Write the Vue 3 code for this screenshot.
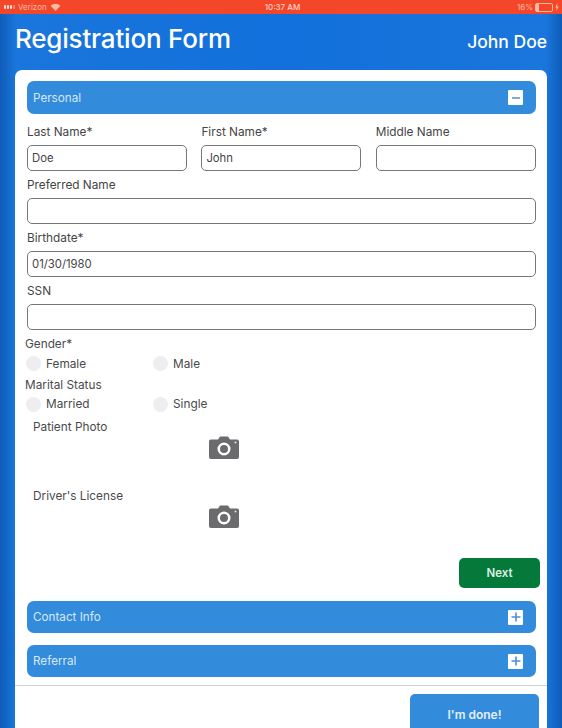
<template>
  <div class="screen">
    <div class="status-bar">
      <div class="status-left">
        <span class="signal"><i></i><i></i><i></i><i class="off"></i></span>
        <span>Verizon</span>
        <svg class="wifi" width="11" height="8" viewBox="0 0 12 9">
          <path d="M0.5 3 A8 8 0 0 1 11.5 3 L6 9 Z" fill="#f9b9a4" />
        </svg>
      </div>
      <div class="status-time">10:37 AM</div>
      <div class="status-right">
        <span>16%</span>
        <span class="battery"><i></i></span>
        <svg width="4" height="8" viewBox="0 0 4 8"><path d="M2.4 0 L0.3 4.5 H1.7 L1.4 8 L3.7 3.4 H2.2 Z" fill="#f9b9a4" /></svg>
      </div>
    </div>

    <header class="top">
      <h1>Registration Form</h1>
      <span class="user">John Doe</span>
    </header>

    <main class="card">
      <div class="card-body">
        <div class="section-bar">
          <span>Personal</span>
          <span class="toggle"><svg width="12" height="12" viewBox="0 0 12 12"><path d="M2 6 H10" stroke="#7fa9d8" stroke-width="2" /></svg></span>
        </div>

        <div class="row-3">
          <div v-for="f in nameFields" :key="f.label" class="field">
            <label>{{ f.label }}</label>
            <input :value="f.value" />
          </div>
        </div>

        <div v-for="f in wideFields" :key="f.label" class="field wide">
          <label>{{ f.label }}</label>
          <input :value="f.value" />
        </div>

        <div v-for="g in radioGroups" :key="g.label" class="radio-group">
          <div class="group-label">{{ g.label }}</div>
          <div class="radio-row">
            <div v-for="o in g.options" :key="o" class="radio">
              <span class="dot"></span>
              <span>{{ o }}</span>
            </div>
          </div>
        </div>

        <div v-for="p in photos" :key="p" class="photo">
          <div class="photo-label">{{ p }}</div>
          <svg class="camera" width="30" height="23" viewBox="0 0 30 23">
            <path
              fill-rule="evenodd"
              fill="#6b6b6d"
              d="M2 3.5 H9 L11 0.5 H19 L21 3.5 H28 A2 2 0 0 1 30 5.5 V21 A2 2 0 0 1 28 23 H2 A2 2 0 0 1 0 21 V5.5 A2 2 0 0 1 2 3.5 Z M15 6.5 A6.5 6.5 0 1 0 15 19.5 A6.5 6.5 0 1 0 15 6.5 Z M15 9 A4 4 0 1 1 15 17 A4 4 0 1 1 15 9 Z"
            />
            <circle cx="26.5" cy="6.5" r="1" fill="#e6e6e6" />
          </svg>
        </div>

        <div class="next-row">
          <button class="next">Next</button>
        </div>

        <div v-for="s in collapsed" :key="s" class="section-bar closed">
          <span>{{ s }}</span>
          <span class="toggle"><svg width="12" height="12" viewBox="0 0 12 12"><path d="M1.5 6 H10.5 M6 1.5 V10.5" stroke="#4f8fd8" stroke-width="1.6" /></svg></span>
        </div>
      </div>

      <footer class="card-foot">
        <button class="done">I'm done!</button>
      </footer>
    </main>
  </div>
</template>

<script setup>
const nameFields = [
  { label: 'Last Name*', value: 'Doe' },
  { label: 'First Name*', value: 'John' },
  { label: 'Middle Name', value: '' }
];

const wideFields = [
  { label: 'Preferred Name', value: '' },
  { label: 'Birthdate*', value: '01/30/1980' },
  { label: 'SSN', value: '' }
];

const radioGroups = [
  { label: 'Gender*', options: ['Female', 'Male'] },
  { label: 'Marital Status', options: ['Married', 'Single'] }
];

const photos = ['Patient Photo', "Driver's License"];
const collapsed = ['Contact Info', 'Referral'];
</script>

<style>
html,
body {
  margin: 0;
  overflow: hidden;
}
</style>

<style scoped>
.screen {
  width: 562px;
  height: 728px;
  overflow: hidden;
  display: flex;
  flex-direction: column;
  font-family: Inter, "Liberation Sans", sans-serif;
  background: linear-gradient(90deg, #0e5cb8 0, #1a76dc 16px, #1270dc 50%, #1a76dc 546px, #0e5cb8 562px);
  color: #4a4a4c;
}

.status-bar {
  height: 14px;
  flex: none;
  background: #f4472a;
  color: #f9b9a4;
  font-size: 8px;
  display: grid;
  grid-template-columns: 1fr auto 1fr;
  align-items: center;
  padding: 0 3px 0 4px;
}

.status-left,
.status-right {
  display: flex;
  align-items: center;
  gap: 3px;
}

.status-right {
  justify-content: flex-end;
  gap: 2px;
}

.status-time {
  color: #fbd3c6;
  font-weight: 500;
  transform: translateX(1px);
}

.signal {
  display: flex;
  gap: 1px;
  align-items: center;
}

.signal i {
  width: 2px;
  height: 4px;
  border-radius: 1px;
  background: #fde3da;
}

.signal i.off {
  background: #f98a70;
}

.battery {
  width: 16px;
  height: 7px;
  border: 1px solid #f9b9a4;
  border-radius: 2px;
  display: block;
}

.battery i {
  display: block;
  width: 3px;
  height: 100%;
  background: #f9b9a4;
}

.top {
  height: 56px;
  flex: none;
  display: flex;
  justify-content: space-between;
  align-items: center;
  padding: 0 15px 7px;
  color: #fff;
  box-sizing: border-box;
}

.top h1 {
  margin: 0;
  font-size: 26px;
  font-weight: 500;
  letter-spacing: -0.2px;
}

.user {
  font-size: 17.5px;
  font-weight: 500;
  margin-top: 5px;
}

.card {
  flex: 1;
  margin: 0 15px;
  background: #fff;
  border-radius: 7px 7px 0 0;
  display: flex;
  flex-direction: column;
  min-height: 0;
}

.card-body {
  padding: 11px 11px 0 12px;
  flex: none;
  height: 616px;
  box-sizing: border-box;
  border-bottom: 1px solid #d3d1d6;
}

.section-bar {
  height: 33px;
  border-radius: 7px;
  background: #338bdc;
  color: #d6e8f8;
  font-size: 11.7px;
  display: flex;
  justify-content: space-between;
  align-items: center;
  padding: 0 13px 0 6px;
}

.section-bar.closed {
  height: 32px;
  margin-top: 12px;
}

.toggle {
  width: 15px;
  height: 15px;
  background: #fff;
  display: flex;
  align-items: center;
  justify-content: center;
  border-radius: 1px;
}

.row-3 {
  display: grid;
  grid-template-columns: repeat(3, 160px);
  column-gap: 14.4px;
  margin-top: 11px;
}

.field label {
  display: block;
  font-size: 11.8px;
  line-height: 15px;
  margin-bottom: 5px;
  color: #444446;
}

.field input {
  display: block;
  width: 100%;
  height: 26px;
  box-sizing: border-box;
  border: 1px solid #77767a;
  border-radius: 5px;
  padding: 0 4px;
  font: 11.3px Inter, "Liberation Sans", sans-serif;
  color: #444446;
  background: #fff;
  outline: none;
}

.field.wide {
  margin-top: 7px;
}

.radio-group {
  margin-top: 7px;
}

.radio-group + .radio-group {
  margin-top: 4px;
}

.group-label {
  font-size: 11.8px;
  line-height: 15px;
  margin-left: -2px;
}

.radio-row {
  display: flex;
  margin: 1.5px 0 0 -1px;
  height: 20px;
  align-items: center;
}

.radio {
  width: 127px;
  display: flex;
  align-items: center;
  gap: 5px;
  font-size: 11.8px;
}

.dot {
  width: 15px;
  height: 15px;
  border-radius: 50%;
  background: #eeedef;
}

.photo {
  height: 69px;
  padding-left: 6px;
}

.radio-group + .photo {
  margin-top: 6px;
}

.photo-label {
  font-size: 11.8px;
  line-height: 15px;
}

.camera {
  display: block;
  margin: 1px 0 0 176px;
}

.next-row {
  display: flex;
  justify-content: flex-end;
  margin: 0 -4px 13px 0;
}

.next {
  width: 81px;
  height: 30px;
  background: #05793a;
  color: #dcefe3;
  border: none;
  border-radius: 5px;
  font: 600 11.5px Inter, "Liberation Sans", sans-serif;
}

.card-foot {
  display: flex;
  justify-content: flex-end;
  padding: 8px 8px 0 0;
}

.done {
  width: 129px;
  height: 40px;
  flex: none;
  background: #338bdc;
  color: #e4f0fa;
  border: none;
  border-radius: 5px;
  font: 600 12px Inter, "Liberation Sans", sans-serif;
}
</style>
